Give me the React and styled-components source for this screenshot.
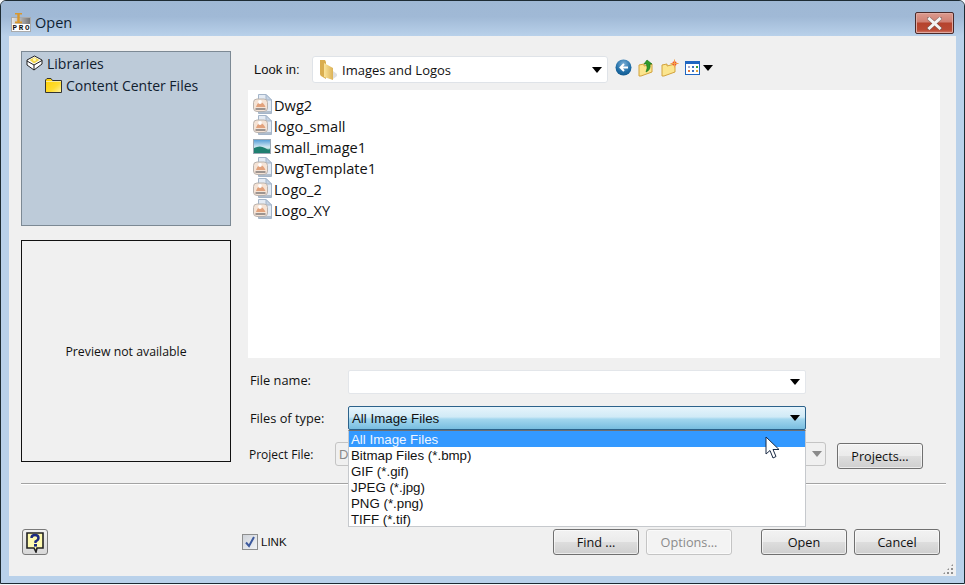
import React from "react";
import styled, { createGlobalStyle } from "styled-components";

const FILES = [
  { name: "Dwg2", kind: "dwg" },
  { name: "logo_small", kind: "dwg" },
  { name: "small_image1", kind: "img" },
  { name: "DwgTemplate1", kind: "dwg" },
  { name: "Logo_2", kind: "dwg" },
  { name: "Logo_XY", kind: "dwg" },
];

const TYPES = [
  "All Image Files",
  "Bitmap Files (*.bmp)",
  "GIF (*.gif)",
  "JPEG (*.jpg)",
  "PNG (*.png)",
  "TIFF (*.tif)",
];

const ProIcon = () => (
  <svg width="21" height="21" viewBox="0 0 21 21">
    <defs>
      <linearGradient id="proGrey" x1="0" x2="1" y1="0" y2="0">
        <stop offset="0" stopColor="#e6e6e6" />
        <stop offset="1" stopColor="#777" />
      </linearGradient>
    </defs>
    <rect x="0.5" y="5.5" width="19" height="14" fill="#fff" stroke="#aaa" />
    <rect x="1" y="6" width="18" height="6" fill="url(#proGrey)" />
    <path d="M4 1h7v1.6H8.7v7H11v1.6H4V9.6h2.3v-7H4z" fill="#d9972c" />
    <text x="1.5" y="18" fontFamily="Liberation Mono, monospace" fontWeight="700" fontSize="7.5" fill="#111" textLength="17">PRO</text>
  </svg>
);

const CloseGlyph = () => (
  <svg width="15" height="13" viewBox="0 0 15 13">
    <path d="M2 1.5 L13 11.5 M13 1.5 L2 11.5" stroke="#5a5a5a" strokeWidth="4" strokeLinecap="square" opacity="0.55" />
    <path d="M2.5 2 L12.5 11 M12.5 2 L2.5 11" stroke="#f4f4f4" strokeWidth="3" strokeLinecap="square" />
  </svg>
);

const BrickIcon = () => (
  <svg width="17" height="16" viewBox="0 0 17 16">
    <path d="M1 5 L8.5 1 L16 5 V9 L8 15 L1 10 Z" fill="#fff" stroke="#222" />
    <path d="M3.5 5 L8.5 2.2 L13.5 5 L8 8.5 Z" fill="#f3d84a" />
    <circle cx="8.5" cy="4.6" r="1.6" fill="#fff6b8" />
    <path d="M1 6 L8 10 L16 5.5 M8 10 V15" fill="none" stroke="#222" />
  </svg>
);

const TreeFolderIcon = () => (
  <svg width="17" height="15" viewBox="0 0 17 15">
    <defs>
      <linearGradient id="treeFolder" x1="0" x2="1" y1="0" y2="1">
        <stop offset="0" stopColor="#ffcf00" />
        <stop offset="0.6" stopColor="#ffdc30" />
        <stop offset="1" stopColor="#fff4a8" />
      </linearGradient>
    </defs>
    <path d="M0.5 14.5 V2 L2 0.5 H6 L7.5 2.5 H16.5 V14.5 Z" fill="url(#treeFolder)" stroke="#333" />
    <path d="M1 3.5 H16" stroke="#f7e9a0" />
  </svg>
);

const LookInFolder = () => (
  <svg width="18" height="22" viewBox="0 0 18 22">
    <defs>
      <linearGradient id="lookFolder" x1="0" x2="1" y1="0" y2="0">
        <stop offset="0" stopColor="#fbe49a" />
        <stop offset="1" stopColor="#dcb257" />
      </linearGradient>
    </defs>
    <path d="M1 1 H6 L7 3 V20 L2 17 Q1 16 1 15 Z" fill="#d9ad4f" />
    <path d="M5 4 L14 9 V21 L5 18 Z" fill="url(#lookFolder)" />
    <path d="M14 12 L18 15 V17 L14 20 Z" fill="#c9c9c9" opacity="0.6" />
  </svg>
);

const DwgIcon = () => (
  <svg width="20" height="21" viewBox="0 0 20 21">
    <path d="M5.5 0.5 H13 L18.5 6 V19.5 H5.5 Z" fill="#e4ebf4" stroke="#a4b5c9" />
    <path d="M13 0.5 V6 H18.5 Z" fill="#c5d3e4" stroke="#a4b5c9" />
    <rect x="0.5" y="5" width="14" height="12.5" rx="3.5" fill="#f5e3d5" stroke="#b9b3ae" />
    <path d="M3 13 Q5 7.5 7.5 8 Q10.5 8.5 12.5 13 Z" fill="#e2a27c" />
    <circle cx="7" cy="8" r="1.9" fill="#fff" />
    <path d="M2.5 14 H12.5 V16 H2.5 Z" fill="#7e7a78" opacity="0.75" />
    <path d="M15 17 H18 V19 H6 V18 Z" fill="#9aa9bb" opacity="0.7" />
  </svg>
);

const PictureIcon = () => (
  <svg width="18" height="15" viewBox="0 0 18 15">
    <defs>
      <linearGradient id="pictureSky" x1="0" x2="0" y1="0" y2="1">
        <stop offset="0" stopColor="#4f9bd6" />
        <stop offset="0.55" stopColor="#d5eaf3" />
        <stop offset="1" stopColor="#2e9a6e" />
      </linearGradient>
    </defs>
    <rect x="0.5" y="0.5" width="17" height="14" fill="url(#pictureSky)" stroke="#9aa7b3" />
    <path d="M1 9 Q7 6 12 9 T17 9 V14 H1 Z" fill="#1f7f70" />
  </svg>
);

const BackIcon = () => (
  <svg width="17" height="17" viewBox="0 0 17 17">
    <defs>
      <radialGradient id="backBall" cx="0.5" cy="0.3" r="0.8">
        <stop offset="0" stopColor="#7fb1d8" />
        <stop offset="0.6" stopColor="#1f6da6" />
        <stop offset="1" stopColor="#0b4f82" />
      </radialGradient>
    </defs>
    <circle cx="8.5" cy="8.5" r="8" fill="url(#backBall)" />
    <path d="M13 8.5 H6 M9 5 L5.5 8.5 L9 12" fill="none" stroke="#fff" strokeWidth="2" />
  </svg>
);

const OpenFolder = () => (
  <path d="M1 6 L6 5 V7 L14 5 V13 L3 17 H1 Z" fill="#fbe58e" stroke="#d2a23c" />
);

const UpIcon = () => (
  <svg width="17" height="18" viewBox="0 0 17 18">
    <OpenFolder />
    <path d="M9 1 L14 5 H12 Q13 11 8 13 Q10 9 8.5 5 H6 Z" fill="#2f9a2a" stroke="#14701a" strokeWidth="0.6" />
  </svg>
);

const NewFolderIcon = () => (
  <svg width="18" height="18" viewBox="0 0 18 18">
    <OpenFolder />
    <circle cx="13.5" cy="4.5" r="2.2" fill="#f0542a" />
    <path d="M13.5 0.5 V8.5 M9.5 4.5 H17.5" stroke="#f3a04a" />
  </svg>
);

const ViewsIcon = () => (
  <svg width="15" height="14" viewBox="0 0 15 14">
    <rect x="0.5" y="0.5" width="14" height="13" fill="#fff" stroke="#1f66c1" />
    <rect x="1" y="1" width="13" height="2" fill="#1f66c1" />
    <rect x="3" y="5" width="2" height="2" fill="#a9a9c9" />
    <rect x="7" y="5" width="2" height="2" fill="#3a6fc0" />
    <rect x="11" y="5" width="2" height="2" fill="#37a03a" />
    <rect x="3" y="9" width="2" height="2" fill="#e77b3a" />
    <rect x="7" y="9" width="2" height="2" fill="#3a6fc0" />
    <rect x="11" y="9" width="2" height="2" fill="#e0a33a" />
  </svg>
);

const HelpIcon = () => (
  <svg width="20" height="21" viewBox="0 0 20 21">
    <path d="M2 1 H18 V16 H12 L11 20 L9 16 H2 Z" fill="#fffbb0" stroke="#222" strokeWidth="1.6" />
    <path d="M6.5 6 Q6.5 3 10 3 Q13.5 3 13.5 6 Q13.5 8 10.5 9.5 V11" fill="none" stroke="#1c2a80" strokeWidth="2.4" />
    <rect x="9" y="12" width="3" height="2.6" fill="#1c2a80" />
  </svg>
);

const CheckGlyph = () => (
  <svg width="12" height="12" viewBox="0 0 12 12">
    <path d="M2 6.5 L5 10 L10 1" fill="none" stroke="#3d5a9e" strokeWidth="2" />
  </svg>
);

const MouseCursor = () => (
  <svg width="16" height="24" viewBox="0 0 16 24">
    <path d="M1 1 V18 L5 14.5 L8 22 L11 20.5 L8 13.5 H14 Z" fill="#fff" stroke="#1a2a44" strokeWidth="1" />
  </svg>
);

export default function App() {
  return (
    <>
      <GlobalStyle />
      <Window>
        <TitleBar>
          <TitleLeft>
            <ProIcon />
            <TitleText>Open</TitleText>
          </TitleLeft>
          <CloseButton>
            <CloseGlyph />
          </CloseButton>
        </TitleBar>
        <Body>
          <Columns>
            <Sidebar>
              <TreePanel>
                <TreeRow>
                  <BrickIcon />
                  Libraries
                </TreeRow>
                <TreeRow $child>
                  <TreeFolderIcon />
                  Content Center Files
                </TreeRow>
              </TreePanel>
              <PreviewPanel>Preview not available</PreviewPanel>
            </Sidebar>
            <Main>
              <Toolbar>
                <LookInLabel>Look in:</LookInLabel>
                <LookInCombo>
                  <LookInValue>
                    <LookInFolder />
                    Images and Logos
                  </LookInValue>
                  <Arrow />
                </LookInCombo>
                <ToolIcons>
                  <BackIcon />
                  <UpIcon />
                  <NewFolderIcon />
                  <ViewsGroup>
                    <ViewsIcon />
                    <Arrow />
                  </ViewsGroup>
                </ToolIcons>
              </Toolbar>
              <FileList>
                {FILES.map((file) => (
                  <FileRow key={file.name}>
                    <FileIconSlot>
                      {file.kind === "dwg" ? <DwgIcon /> : <PictureIcon />}
                    </FileIconSlot>
                    {file.name}
                  </FileRow>
                ))}
              </FileList>
              <FormRow>
                <FieldLabel $raised>File name:</FieldLabel>
                <Combo>
                  <span />
                  <Arrow />
                </Combo>
              </FormRow>
              <FormRow>
                <FieldLabel>Files of type:</FieldLabel>
                <TypeField>
                  <Combo $active>
                    All Image Files
                    <Arrow />
                  </Combo>
                  <TypeMenu>
                    {TYPES.map((type, i) => (
                      <TypeOption key={type} $selected={i === 0}>
                        {type}
                      </TypeOption>
                    ))}
                  </TypeMenu>
                  <CursorSpot>
                    <MouseCursor />
                  </CursorSpot>
                </TypeField>
              </FormRow>
              <ProjectRow>
                <ProjectLabel>Project File:</ProjectLabel>
                <ProjectCombo>
                  D
                  <Arrow $disabled />
                </ProjectCombo>
                <Button $lowered>Projects...</Button>
              </ProjectRow>
            </Main>
          </Columns>
          <Separator />
          <Footer>
            <HelpButton>
              <HelpIcon />
            </HelpButton>
            <LinkOption>
              <CheckBox>
                <CheckGlyph />
              </CheckBox>
              LINK
            </LinkOption>
            <FooterButtons>
              <Button>Find ...</Button>
              <Button $disabled>Options...</Button>
              <DialogButtons>
                <Button>Open</Button>
                <Button>Cancel</Button>
              </DialogButtons>
            </FooterButtons>
          </Footer>
          <ResizeGrip />
        </Body>
      </Window>
    </>
  );
}

const GlobalStyle = createGlobalStyle`
  html, body {
    margin: 0;
    padding: 0;
    background: #f4f7fa;
  }
  * {
    box-sizing: border-box;
  }
`;

const Window = styled.div`
  width: 965px;
  height: 584px;
  display: flex;
  flex-direction: column;
  background: #b9d1ea;
  border: 1px solid #1d2b33;
  border-radius: 6px 6px 0 0;
  overflow: hidden;
`;

const TitleBar = styled.div`
  height: 35px;
  flex: none;
  display: flex;
  align-items: center;
  justify-content: space-between;
  padding: 0 10px 0 10px;
  background: linear-gradient(#9fb8d4 0%, #a0b9d6 45%, #b9d1ea 100%);
`;

const TitleLeft = styled.div`
  display: flex;
  align-items: center;
  gap: 3px;
  margin-top: 7px;
`;

const TitleText = styled.span`
  font: 14.5px "Open Sans", sans-serif;
  color: #0f1f33;
  margin-top: 1px;
`;

const CloseButton = styled.div`
  width: 39px;
  height: 22px;
  margin-top: 9px;
  display: flex;
  align-items: center;
  justify-content: center;
  border: 1px solid #4a2a2a;
  border-radius: 2px;
  box-shadow: inset 0 0 0 1px #e0a9a0;
  background: linear-gradient(#dc9a8e 0%, #cf7f72 45%, #b5432d 50%, #ba4a34 85%, #d38070 100%);
`;

const Body = styled.div`
  position: relative;
  width: 947px;
  height: 540px;
  margin-left: 8px;
  padding: 15px 10px 0 12px;
  background: #f0f0f0;
`;

const Columns = styled.div`
  display: flex;
  gap: 17px;
`;

const Sidebar = styled.div`
  width: 210px;
  display: flex;
  flex-direction: column;
  gap: 14px;
`;

const TreePanel = styled.div`
  height: 175px;
  padding: 0 0 0 3px;
  background: #bdcbd9;
  border: 1px solid #7c8994;
`;

const TreeRow = styled.div`
  display: flex;
  align-items: center;
  gap: 4px;
  height: 22px;
  margin-left: ${(p) => (p.$child ? "20px" : "1px")};
  font: 14px "Open Sans", sans-serif;
  color: #10202f;
`;

const PreviewPanel = styled.div`
  height: 222px;
  display: flex;
  align-items: center;
  justify-content: center;
  background: #f0f0f0;
  border: 1px solid #111;
  font: 12.3px "Open Sans", sans-serif;
  color: #111;
`;

const Main = styled.div`
  width: 692px;
  display: flex;
  flex-direction: column;
  padding-top: 5px;
`;

const Toolbar = styled.div`
  height: 27px;
  display: flex;
  align-items: center;
  margin-bottom: 7px;
`;

const LookInLabel = styled.div`
  width: 64px;
  padding-left: 6px;
  font: 13px "Liberation Sans", sans-serif;
  color: #111;
`;

const LookInCombo = styled.div`
  width: 296px;
  height: 27px;
  display: flex;
  align-items: center;
  justify-content: space-between;
  padding: 0 4px 0 6px;
  background: #fff;
  border: 1px solid #dfe3e8;
  border-radius: 3px;
`;

const LookInValue = styled.div`
  display: flex;
  align-items: center;
  gap: 5px;
  font: 13px "Open Sans", sans-serif;
  color: #111;
`;

const ToolIcons = styled.div`
  display: flex;
  align-items: center;
  gap: 6px;
  margin-left: 7px;
  margin-bottom: 4px;
`;

const ViewsGroup = styled.div`
  display: flex;
  align-items: center;
  gap: 3px;
`;

const Arrow = styled.span`
  display: block;
  flex: none;
  width: 0;
  height: 0;
  margin-right: 1px;
  border-left: 5px solid transparent;
  border-right: 5px solid transparent;
  border-top: 6px solid ${(p) => (p.$disabled ? "#8a8a8a" : "#000")};
`;

const FileList = styled.div`
  height: 268px;
  padding: 4px 0 0 5px;
  margin-bottom: 12px;
  background: #fff;
`;

const FileRow = styled.div`
  display: flex;
  align-items: center;
  height: 21px;
  font: 14.6px "Open Sans", sans-serif;
  color: #111;
`;

const FileIconSlot = styled.span`
  width: 21px;
  display: flex;
  align-items: center;
`;

const FormRow = styled.div`
  display: flex;
  align-items: center;
  margin-bottom: 12px;
`;

const FieldLabel = styled.div`
  width: 100px;
  padding: 0 0 ${(p) => (p.$raised ? "4px" : "0")} 2px;
  font: 12.8px "Open Sans", sans-serif;
  color: #111;
`;

const Combo = styled.div`
  width: 458px;
  height: 24px;
  display: flex;
  align-items: center;
  justify-content: space-between;
  padding: 0 4px 0 3px;
  font: 13.3px "Liberation Sans", sans-serif;
  color: #111;
  background: ${(p) =>
    p.$active
      ? "linear-gradient(#e6f4fb 0%, #d0eaf6 45%, #a2d6ee 55%, #78bde0 100%)"
      : "#fff"};
  border: 1px solid ${(p) => (p.$active ? "#2c628b" : "#e3e6ea")};
  border-radius: 2px;
`;

const TypeField = styled.div`
  position: relative;
`;

const TypeMenu = styled.div`
  position: absolute;
  z-index: 2;
  top: 24px;
  left: 0;
  width: 458px;
  height: 97px;
  background: #fff;
  border: 1px solid #c6c9cd;
  border-top-color: #6f6f6f;
`;

const TypeOption = styled.div`
  height: 16px;
  padding-left: 2px;
  font: 13.3px/18px "Liberation Sans", sans-serif;
  color: ${(p) => (p.$selected ? "#eef6ff" : "#111")};
  background: ${(p) => (p.$selected ? "#3399ff" : "transparent")};
`;

const CursorSpot = styled.div`
  position: absolute;
  z-index: 3;
  top: 30px;
  left: 417px;
`;

const ProjectRow = styled.div`
  display: flex;
  align-items: flex-start;
`;

const ProjectLabel = styled.div`
  width: 87px;
  padding: 4px 0 0 1px;
  font: 12px "Open Sans", sans-serif;
  color: #111;
`;

const ProjectCombo = styled.div`
  width: 491px;
  height: 24px;
  margin-right: 11px;
  display: flex;
  align-items: center;
  justify-content: space-between;
  padding: 0 2px 0 3px;
  font: 13px "Liberation Sans", sans-serif;
  color: #8a8a8a;
  background: #f0f0f0;
  border: 1px solid #c4c4c4;
  border-radius: 3px;
`;

const Button = styled.div`
  width: 86px;
  height: 26px;
  flex: none;
  margin-top: ${(p) => (p.$lowered ? "1px" : "0")};
  display: flex;
  align-items: center;
  justify-content: center;
  font: 12.7px "Open Sans", sans-serif;
  color: ${(p) => (p.$disabled ? "#8b8b8b" : "#111")};
  background: ${(p) =>
    p.$disabled
      ? "#f3f3f3"
      : "linear-gradient(#f2f2f2 0%, #ebebeb 48%, #dddddd 52%, #cfcfcf 100%)"};
  border: 1px solid ${(p) => (p.$disabled ? "#c4c4c4" : "#707070")};
  border-radius: 3px;
  box-shadow: inset 0 0 0 1px rgba(255, 255, 255, 0.6);
`;

const Separator = styled.div`
  width: 925px;
  height: 2px;
  margin-top: 14px;
  background: #a3a3a3;
  border-bottom: 1px solid #fff;
`;

const Footer = styled.div`
  display: flex;
  align-items: center;
  margin: 44px 0 0 1px;
`;

const HelpButton = styled.div`
  width: 26px;
  height: 26px;
  display: flex;
  align-items: center;
  justify-content: center;
  background: linear-gradient(#f2f2f2, #d8d8d8);
  border: 1px solid #7a7a7a;
  border-radius: 3px;
`;

const LinkOption = styled.div`
  display: flex;
  align-items: center;
  gap: 3px;
  width: 311px;
  margin-left: 194px;
  font: 11.5px "Liberation Sans", sans-serif;
  color: #111;
`;

const CheckBox = styled.span`
  width: 16px;
  height: 16px;
  display: flex;
  align-items: center;
  justify-content: center;
  background: linear-gradient(135deg, #cfd3da, #f2f4f6);
  border: 1px solid #8e8f8f;
`;

const FooterButtons = styled.div`
  display: flex;
  gap: 7px;
`;

const DialogButtons = styled.div`
  display: flex;
  gap: 7px;
  margin-left: 22px;
`;

const ResizeGrip = styled.div`
  position: absolute;
  right: 2px;
  bottom: 1px;
  width: 12px;
  height: 12px;
  background: radial-gradient(circle, #8f8f8f 1px, transparent 1.2px) 0 0 / 4px 4px;
  clip-path: polygon(100% 0, 100% 100%, 0 100%);
`;
